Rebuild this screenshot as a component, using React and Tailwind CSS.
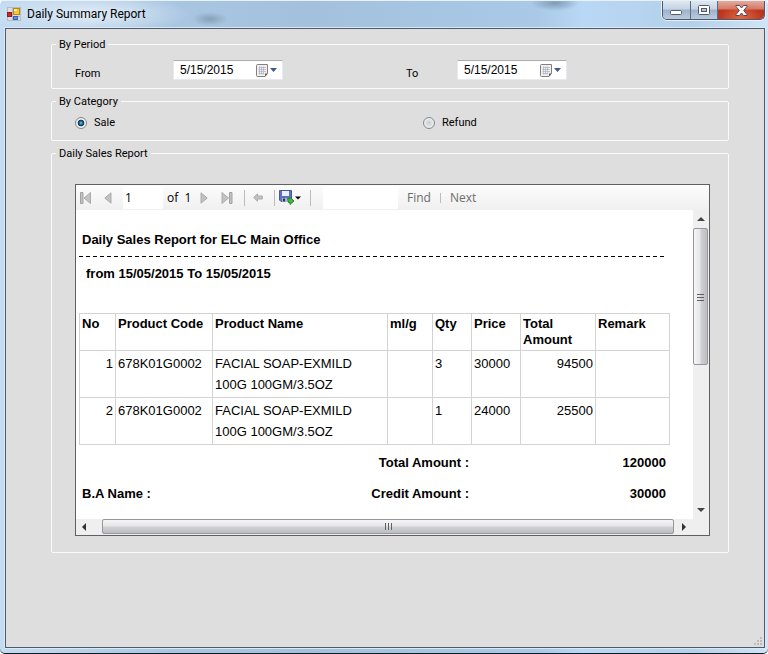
import React from "react";

const rows = [
  { no: 1, code: "678K01G0002", name: "FACIAL SOAP-EXMILD 100G 100GM/3.5OZ", ml: "", qty: 3, price: 30000, total: 94500, remark: "" },
  { no: 2, code: "678K01G0002", name: "FACIAL SOAP-EXMILD 100G 100GM/3.5OZ", ml: "", qty: 1, price: 24000, total: 25500, remark: "" },
];

function AppIcon() {
  return (
    <svg width="14" height="14" viewBox="0 0 14 14" aria-hidden="true">
      <rect x="0.5" y="0.5" width="13" height="13" fill="#d9dee4" stroke="#b3bac3" />
      <path d="M5.5 0.5V13.5M0.5 9.5H13.5" stroke="#b3bac3" />
      <rect x="0.5" y="5.5" width="4" height="4" fill="#c92a1c" stroke="#8f1c14" />
      <rect x="6.5" y="1.5" width="6" height="6" fill="#fbc52c" stroke="#b78a17" />
      <rect x="7" y="2" width="3" height="2" fill="#fff0a8" />
      <rect x="6.5" y="9.5" width="4" height="3" fill="#5b8fe8" stroke="#3563b8" />
    </svg>
  );
}

function WindowButtons() {
  const plain =
    "flex h-[18px] items-center justify-center border-r border-[#5d6d84] bg-[linear-gradient(#dfe8f2_0,#c5d3e3_45%,#9db1c9_50%,#b9cbdf_100%)]";
  return (
    <div className="mr-[3px] flex overflow-hidden rounded-b-[5px] border border-t-0 border-[#4d5869] shadow-[0_0_0_1px_#e8f1fa]">
      <button type="button" aria-label="Minimize" className={plain + " w-7 pt-1"}>
        <svg width="13" height="6" viewBox="0 0 13 6"><rect x="0.5" y="1.5" width="11" height="4" rx="1" fill="#fff" stroke="#525b6b" /></svg>
      </button>
      <button type="button" aria-label="Maximize" className={plain + " w-[27px]"}>
        <svg width="12" height="10" viewBox="0 0 12 10">
          <rect x="0.5" y="0.5" width="11" height="9" rx="1" fill="#fff" stroke="#525b6b" />
          <rect x="3.5" y="3.5" width="5" height="3" fill="#b4c6dc" stroke="#525b6b" />
        </svg>
      </button>
      <button
        type="button"
        aria-label="Close"
        className="flex h-[18px] w-[46px] items-center justify-center bg-[radial-gradient(ellipse_at_50%_100%,#e2683f_0%,transparent_65%),linear-gradient(#e5a99c_0,#d27a68_45%,#bb3420_50%,#b83a26_100%)]"
      >
        <svg width="13" height="11" viewBox="0 0 13 11">
          <path d="M1 0.5H4.5L6.5 3L8.5 0.5H12V1.5L8.7 5.5L12 9.5V10.5H8.5L6.5 8L4.5 10.5H1V9.5L4.3 5.5L1 1.5Z" fill="#fff" stroke="#5a4550" />
        </svg>
      </button>
    </div>
  );
}

function Group({ title, children }) {
  return (
    <fieldset className="min-w-0 rounded-[2px] border border-[#f8fbfd]">
      <legend className="ml-1 px-[3px] font-[Roboto,sans-serif] text-[11px] leading-[15px]">{title}</legend>
      {children}
    </fieldset>
  );
}

function DateField({ id }) {
  return (
    <div className="flex h-5 w-[110px] items-center border border-[#e6e9ee] border-t-[#abadb3] bg-white pr-[5px]">
      <input id={id} defaultValue="5/15/2015" className="w-0 min-w-0 flex-1 bg-transparent pl-[6px] font-['Liberation_Sans',Arial,sans-serif] text-[12px] leading-[18px] outline-none" />
      <button type="button" aria-label="Open calendar" className="flex items-center gap-px">
        <svg width="13" height="13" viewBox="0 0 13 13">
          <path d="M1.5 0.5H11.5V9.5L9 12.5H1.5Q0.5 12.5 0.5 11.5V1.5Q0.5 0.5 1.5 0.5Z" fill="#f1f1f4" stroke="#857c7c" />
          <path d="M11.5 9.5L9 12.5V9.5Z" fill="#55505a" />
          <path d="M2.5 3.5H10M2.5 5.5H10M2.5 7.5H10M2.5 9.5H8M3.5 2.5V10.5M5.5 2.5V10.5M7.5 2.5V10.5" stroke="#a9b0bf" strokeWidth="0.7" />
        </svg>
        <svg width="7" height="4" viewBox="0 0 7 4"><path d="M0 0H7L3.5 4Z" fill="#41588c" /></svg>
      </button>
    </div>
  );
}

function Choice({ id, label, checked }) {
  return (
    <div className="flex items-center gap-[7px]">
      <input
        type="radio"
        name="category"
        id={id}
        defaultChecked={checked}
        className="size-3 appearance-none rounded-full border border-[#85878a] bg-[radial-gradient(circle,#c8cbce_0,#e9eaeb_60%,#fff_100%)] checked:bg-[radial-gradient(circle_at_50%_50%,#7fd0f0_0,#1c6f9c_22%,#12314c_42%,#f0f2f3_52%,#e8e8e8_100%)]"
      />
      <label htmlFor={id} className="font-[Roboto,sans-serif] text-[11px]">{label}</label>
    </div>
  );
}

function Separator() {
  return <span className="h-4 w-px bg-[#bcbcbc]" />;
}

function Toolbar() {
  return (
    <div className="flex h-[25px] items-center bg-[linear-gradient(#fcfcfc,#f0f0f0)] pl-1 font-['Open_Sans',sans-serif] text-[12px]">
      <button type="button" aria-label="First page" className="w-6">
        <svg width="12" height="12" viewBox="0 0 12 12"><path d="M0.5 0.5H3V11.5H0.5Z" fill="#c2c2c2" stroke="#a3a3a3" /><path d="M10.5 0.5V11.5L4 6Z" fill="#c2c2c2" stroke="#ababab" /></svg>
      </button>
      <button type="button" aria-label="Previous page" className="w-[19px]">
        <svg width="8" height="12" viewBox="0 0 8 12"><path d="M7 0.8V11.2L0.8 6Z" fill="#c2c2c2" stroke="#ababab" /></svg>
      </button>
      <input aria-label="Current page" defaultValue="1" className="h-[23px] w-10 bg-white pl-[2px] outline-none" />
      <span className="w-[37px] pl-1 whitespace-pre">of  1</span>
      <button type="button" aria-label="Next page" className="w-[21px]">
        <svg width="8" height="12" viewBox="0 0 8 12"><path d="M1 0.8V11.2L7.2 6Z" fill="#c2c2c2" stroke="#ababab" /></svg>
      </button>
      <button type="button" aria-label="Last page" className="w-[23px]">
        <svg width="12" height="12" viewBox="0 0 12 12"><path d="M8.5 0.5H11V11.5H8.5Z" fill="#c2c2c2" stroke="#a3a3a3" /><path d="M1 0.5V11.5L7.5 6Z" fill="#c2c2c2" stroke="#ababab" /></svg>
      </button>
      <Separator />
      <button type="button" aria-label="Back to parent report" className="w-[29px] pl-2">
        <svg width="10" height="9" viewBox="0 0 10 9"><path d="M0.7 4.5L4.5 0.8V3H9.3V6H4.5V8.2Z" fill="#c2c2c2" stroke="#ababab" /></svg>
      </button>
      <Separator />
      <button type="button" aria-label="Export" className="flex w-[35px] items-center pl-1">
        <svg width="16" height="15" viewBox="0 0 16 15">
          <path d="M0.5 0.5H12.5V11.5H2L0.5 10Z" fill="#5c70c4" stroke="#4a589f" />
          <rect x="3" y="1" width="7" height="5" fill="#e8eefb" />
          <rect x="3" y="8" width="6" height="4" fill="#aab3d0" />
          <rect x="4" y="8.5" width="2" height="3" fill="#2b3260" />
          <path d="M8.5 8.5H10.5V7L15 11L11 14.5V12.5H9.5Z" fill="#3dbb3a" stroke="#208a24" />
        </svg>
        <svg width="6" height="4" viewBox="0 0 6 4"><path d="M0 0.5H6L3 3.5Z" fill="#000" /></svg>
      </button>
      <Separator />
      <input aria-label="Find text" className="ml-3 h-[23px] w-[75px] bg-white outline-none" />
      <button type="button" className="w-[42px] pl-[9px] text-left text-[#6d6d6d]">Find</button>
      <span className="h-[10px] w-px bg-[#bcbcbc]" />
      <button type="button" className="pl-[9px] text-[#6d6d6d]">Next</button>
    </div>
  );
}

function Report() {
  const cell = "border border-[#d3d3d3] px-[2px] py-[2px] align-top";
  return (
    <div className="min-w-0 flex-1 overflow-hidden bg-white pt-5 pb-[10px] pl-[3px] text-[13px] leading-5">
      <h1 className="pl-[3px] font-bold">Daily Sales Report for ELC Main Office</h1>
      <div className="mt-[6px] h-px w-[587px] bg-[repeating-linear-gradient(90deg,#000_0,#000_4px,transparent_4px,transparent_7px)]" />
      <p className="mt-[7px] pl-[7px] font-bold">from 15/05/2015 To 15/05/2015</p>
      <table className="mt-[29px] w-[591px] table-fixed border-collapse">
        <colgroup>
          <col className="w-[36px]" />
          <col className="w-[97px]" />
          <col className="w-[175px]" />
          <col className="w-[45px]" />
          <col className="w-[39px]" />
          <col className="w-[49px]" />
          <col className="w-[75px]" />
          <col className="w-[74px]" />
        </colgroup>
        <thead>
          <tr className="text-left leading-4">
            {["No", "Product Code", "Product Name", "ml/g", "Qty", "Price", "Total Amount", "Remark"].map((h) => (
              <th key={h} className={cell}>{h}</th>
            ))}
          </tr>
        </thead>
        <tbody className="leading-[21px]">
          {rows.map((r) => (
            <tr key={r.no}>
              <td className={cell + " text-right"}>{r.no}</td>
              <td className={cell}>{r.code}</td>
              <td className={cell + " pr-6"}>{r.name}</td>
              <td className={cell}>{r.ml}</td>
              <td className={cell}>{r.qty}</td>
              <td className={cell}>{r.price}</td>
              <td className={cell + " text-right"}>{r.total}</td>
              <td className={cell}>{r.remark}</td>
            </tr>
          ))}
        </tbody>
      </table>
      <div className="mt-[2px] grid w-[587px] grid-cols-[190px_200px_1fr] pl-[3px] leading-[31px] font-bold">
        <span />
        <span className="pr-[3px] text-right">Total Amount :</span>
        <span className="text-right">120000</span>
        <span>B.A Name :</span>
        <span className="pr-[3px] text-right">Credit Amount :</span>
        <span className="text-right">30000</span>
      </div>
    </div>
  );
}

function VerticalBar() {
  return (
    <div className="flex w-4 flex-col bg-[#efefef]">
      <button type="button" aria-label="Scroll up" className="flex h-[18px] items-center justify-center">
        <svg width="8" height="4" viewBox="0 0 8 4"><path d="M4 0L8 4H0Z" fill="#454545" /></svg>
      </button>
      <div className="mr-px flex h-[137px] items-center justify-center rounded-[2px] border border-[#979797] bg-[linear-gradient(90deg,#f5f5f5_0,#e6e6e8_45%,#cfd0d3_55%,#bdbec1_100%)]">
        <svg width="8" height="8" viewBox="0 0 8 8"><path d="M0 1.5H7M0 4.5H7M0 7.5H7" stroke="#606060" /></svg>
      </div>
      <div className="flex-1" />
      <button type="button" aria-label="Scroll down" className="flex h-[18px] items-center justify-center">
        <svg width="8" height="4" viewBox="0 0 8 4"><path d="M0 0H8L4 4Z" fill="#454545" /></svg>
      </button>
    </div>
  );
}

function HorizontalBar() {
  return (
    <div className="flex h-4 bg-[#efefef]">
      <button type="button" aria-label="Scroll left" className="w-[26px] pl-[6px]">
        <svg width="4" height="8" viewBox="0 0 4 8"><path d="M4 0V8L0 4Z" fill="#333" /></svg>
      </button>
      <div className="mb-px flex flex-1 items-center justify-center rounded-[2px] border border-[#979797] bg-[linear-gradient(#f5f5f5_0,#e6e6e8_45%,#cfd0d3_55%,#bdbec1_100%)]">
        <svg width="9" height="8" viewBox="0 0 9 8"><path d="M1.5 0V7M4.5 0V7M7.5 0V7" stroke="#606060" /></svg>
      </div>
      <button type="button" aria-label="Scroll right" className="mr-4 w-[19px] pl-2">
        <svg width="4" height="8" viewBox="0 0 4 8"><path d="M0 0V8L4 4Z" fill="#333" /></svg>
      </button>
    </div>
  );
}

export default function App() {
  return (
    <div className="flex min-h-screen flex-col rounded-t-[5px] rounded-b-[5px] border-b border-[#15181c] bg-[linear-gradient(90deg,#c4dcf2_0,#a9c6e1_22%,#a3c1dd_40%,#a9c9e6_70%,#b9d8f5_76%,#b4d0ea_90%,#cfe4f6_100%)] font-['Liberation_Sans',Arial,sans-serif] text-black">
      <header className="flex h-7 items-start border-t border-[#e9f2fa] bg-[radial-gradient(ellipse_18px_7px_at_210px_18px,#86a0b9_0%,transparent_100%),radial-gradient(ellipse_24px_8px_at_555px_2px,#7f9bb7_0%,transparent_100%),radial-gradient(ellipse_100px_20px_at_90px_13px,#e2edf7_0%,transparent_100%)]">
        <div className="flex h-[26px] flex-1 items-center gap-[6px] pl-[7px]">
          <AppIcon />
          <span className="font-[Roboto,sans-serif] text-[12px]">Daily Summary Report</span>
        </div>
        <WindowButtons />
      </header>
      <main className="mr-[3px] mb-[5px] ml-[5px] flex flex-1 flex-col border border-[#4f5b6c] bg-[#dedede] shadow-[0_0_0_1px_#d9e9f7]">
        <form className="flex flex-1 flex-col gap-[5px] pt-2 pr-[35px] pl-[45px]" onSubmit={(e) => e.preventDefault()}>
          <Group title="By Period">
            <div className="grid h-9 grid-cols-[98px_233px_51px_110px] items-start pt-2 pl-[23px] font-[Roboto,sans-serif]">
              <label htmlFor="from" className="pt-1 text-[11px] leading-5">From</label>
              <DateField id="from" />
              <label htmlFor="to" className="pt-1 text-[11px] leading-5">To</label>
              <DateField id="to" />
            </div>
          </Group>
          <Group title="By Category">
            <div className="grid h-[31px] grid-cols-[348px_1fr] pb-[3px] pl-[23px]">
              <Choice id="sale" label="Sale" checked />
              <Choice id="refund" label="Refund" />
            </div>
          </Group>
          <Group title="Daily Sales Report">
            <section className="mt-[23px] mr-[18px] mb-4 ml-[23px] border border-[#606060]">
              <Toolbar />
              <div className="flex">
                <Report />
                <VerticalBar />
              </div>
              <HorizontalBar />
            </section>
          </Group>
        </form>
        <div className="flex justify-end pr-px pb-px">
          <svg width="10" height="10" viewBox="0 0 10 10" aria-hidden="true">
            <path d="M7 1h2v2h-2zM7 4h2v2h-2zM4 4h2v2h-2zM7 7h2v2h-2zM4 7h2v2h-2zM1 7h2v2h-2z" fill="#bcbcbc" />
          </svg>
        </div>
      </main>
    </div>
  );
}
